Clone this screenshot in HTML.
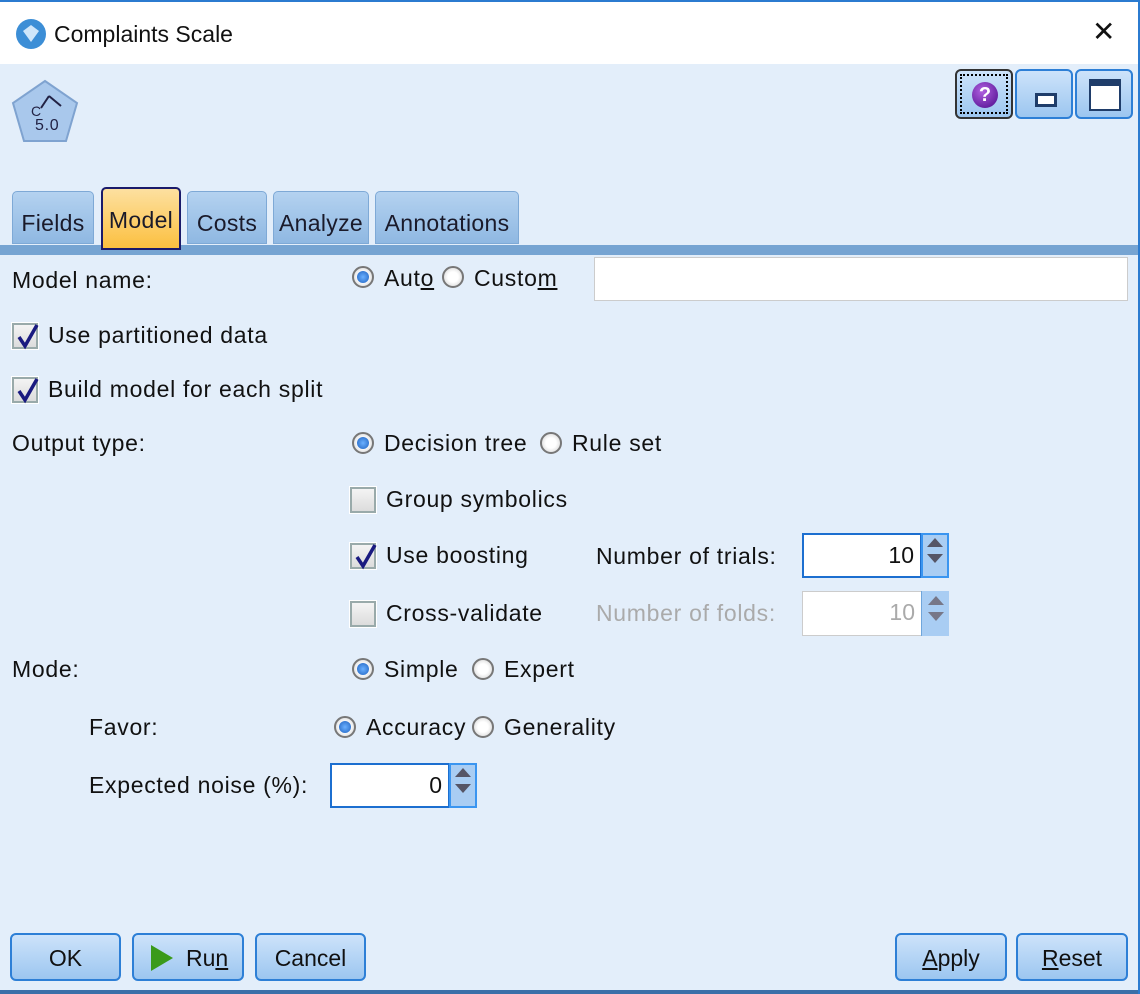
<!DOCTYPE html>
<html><head><meta charset="utf-8"><style>
*{box-sizing:border-box;margin:0;padding:0}
body{width:1140px;height:994px;background:#e3eefa;font-family:"Liberation Sans",Arial,sans-serif;font-size:23px;letter-spacing:0.7px;color:#111;position:relative;overflow:hidden}
.a{position:absolute;white-space:nowrap;line-height:30px}
.title{position:absolute;left:0;top:0;width:1140px;height:64px;background:#fff;border-top:2px solid #2b7bd0}
.tab{position:absolute;top:191px;height:53px;background:linear-gradient(#b4d2f0,#8fb8e2);border:1px solid #7ea9d6;border-radius:5px 5px 0 0;text-align:center;line-height:62px;font-size:23px;letter-spacing:0.3px;color:#1a1a2a}
.cb{position:absolute;width:26px;height:26px;border:2px solid #9aa;background:linear-gradient(#f4f4f4,#dcdcdc);outline:1px solid #fff}
.cb svg{position:absolute;left:1px;top:-2px}
.rd{position:absolute;width:22px;height:22px;border-radius:50%;border:2px solid #777;background:radial-gradient(#fff 40%,#ccc)}
.rd.on::after{content:"";position:absolute;left:3px;top:3px;width:12px;height:12px;border-radius:50%;background:radial-gradient(#6ab0ff,#1f62c0)}
.btn{position:absolute;top:933px;height:48px;border:2px solid #2d7fd6;border-radius:6px;background:linear-gradient(#cde3fa,#9cc6f0);text-align:center;line-height:46px;font-size:23px;letter-spacing:0;color:#111}
.inp{position:absolute;background:#fff;border:2px solid #1c6fd0;text-align:right;padding-right:6px;line-height:40px;letter-spacing:0}
.spin{position:absolute;width:28px;background:#a9cdf3;border-left:1px solid #6fa6dc}
</style></head><body>
<div class="title"></div>
<svg class="a" style="left:15px;top:18px" width="32" height="32"><circle cx="16" cy="16" r="15" fill="#3c8ed6"/><path d="M8 13l8-6 8 6-8 11z" fill="#cfe6fa"/></svg>
<div class="a" style="left:54px;top:19px;font-size:23px;letter-spacing:0">Complaints Scale</div>
<div class="a" style="left:1092px;top:17px;font-size:28px;font-weight:300;letter-spacing:0">✕</div>
<svg class="a" style="left:10px;top:78px" width="70" height="80"><path d="M35 3l32 22-11 38H14L3 25z" fill="#a9c8ec" stroke="#7fa3d0" stroke-width="2"/><text x="25" y="52" font-family="Liberation Sans" font-size="16" fill="#224">5.0</text><text x="21" y="38" font-size="14" fill="#224" font-family="Liberation Sans">C</text><path d="M39 18l-8 12M39 18l12 10" stroke="#224" stroke-width="2"/></svg>
<div style="position:absolute;left:955px;top:69px;width:58px;height:50px;border:2px solid #333;border-radius:6px;background:linear-gradient(#cde3fa,#9cc6f0)"><div style="position:absolute;inset:3px;border:2px dotted #000"></div><div style="position:absolute;left:15px;top:11px;width:26px;height:26px;border-radius:50%;background:radial-gradient(circle at 40% 35%,#b060e0,#4a0a8a);color:#fff;font-weight:bold;text-align:center;line-height:26px;font-size:20px;letter-spacing:0">?</div></div>
<div style="position:absolute;left:1015px;top:69px;width:58px;height:50px;border:2px solid #2d7fd6;border-radius:6px;background:linear-gradient(#cde3fa,#9cc6f0)"><div style="position:absolute;left:18px;top:22px;width:22px;height:14px;border:3px solid #1f3d6a;background:#fff"></div></div>
<div style="position:absolute;left:1075px;top:69px;width:58px;height:50px;border:2px solid #2d7fd6;border-radius:6px;background:linear-gradient(#cde3fa,#9cc6f0)"><div style="position:absolute;left:12px;top:8px;width:32px;height:32px;border:2px solid #1f3d6a;border-top-width:7px;background:#fff"></div></div>
<div style="position:absolute;left:0;top:245px;width:1140px;height:10px;background:#76a4d2"></div>
<div class="tab" style="left:12px;width:82px">Fields</div>
<div class="tab" style="left:101px;top:187px;width:80px;height:63px;background:linear-gradient(#fde0a0,#fbc040);border:2px solid #1a1a6a;line-height:62px">Model</div>
<div class="tab" style="left:187px;width:80px">Costs</div>
<div class="tab" style="left:273px;width:96px">Analyze</div>
<div class="tab" style="left:375px;width:144px">Annotations</div>

<div class="a" style="left:12px;top:265px">Model name:</div>
<div class="rd on" style="left:352px;top:266px"></div><div class="a" style="left:384px;top:263px">Aut<u>o</u></div>
<div class="rd" style="left:442px;top:266px"></div><div class="a" style="left:474px;top:263px">Custo<u>m</u></div>
<div style="position:absolute;left:594px;top:257px;width:534px;height:44px;background:#fff;border:1px solid #ccc"></div>

<div class="cb" style="left:12px;top:323px"><svg width="26" height="28"><path d="M4 14l6 9L22 2" stroke="#1a1a80" stroke-width="3.5" fill="none"/></svg></div><div class="a" style="left:48px;top:320px">Use partitioned data</div>
<div class="cb" style="left:12px;top:377px"><svg width="26" height="28"><path d="M4 14l6 9L22 2" stroke="#1a1a80" stroke-width="3.5" fill="none"/></svg></div><div class="a" style="left:48px;top:374px">Build model for each split</div>

<div class="a" style="left:12px;top:428px">Output type:</div>
<div class="rd on" style="left:352px;top:432px"></div><div class="a" style="left:384px;top:428px">Decision tree</div>
<div class="rd" style="left:540px;top:432px"></div><div class="a" style="left:572px;top:428px">Rule set</div>

<div class="cb" style="left:350px;top:487px"></div><div class="a" style="left:386px;top:484px">Group symbolics</div>
<div class="cb" style="left:350px;top:543px"><svg width="26" height="28"><path d="M4 14l6 9L22 2" stroke="#1a1a80" stroke-width="3.5" fill="none"/></svg></div><div class="a" style="left:386px;top:540px">Use boosting</div>
<div class="a" style="left:596px;top:541px">Number of trials:</div>
<div class="inp" style="left:802px;top:533px;width:120px;height:45px">10</div>
<div class="spin" style="left:921px;top:533px;height:45px;border:2px solid #3a95f0"><div style="margin:3px auto;width:0;border:8px solid transparent;border-bottom:9px solid #556;border-top:0"></div><div style="margin:7px auto;width:0;border:8px solid transparent;border-top:9px solid #556;border-bottom:0"></div></div>
<div class="cb" style="left:350px;top:601px"></div><div class="a" style="left:386px;top:598px">Cross-validate</div>
<div class="a" style="left:596px;top:598px;color:#aaa">Number of folds:</div>
<div class="inp" style="left:802px;top:591px;width:120px;height:45px;border:1px solid #ccc;color:#aaa">10</div>
<div class="spin" style="left:921px;top:591px;height:45px"><div style="margin:5px auto;width:0;border:8px solid transparent;border-bottom:9px solid #778;border-top:0"></div><div style="margin:7px auto;width:0;border:8px solid transparent;border-top:9px solid #778;border-bottom:0"></div></div>

<div class="a" style="left:12px;top:654px">Mode:</div>
<div class="rd on" style="left:352px;top:658px"></div><div class="a" style="left:384px;top:654px">Simple</div>
<div class="rd" style="left:472px;top:658px"></div><div class="a" style="left:504px;top:654px">Expert</div>

<div class="a" style="left:89px;top:712px">Favor:</div>
<div class="rd on" style="left:334px;top:716px"></div><div class="a" style="left:366px;top:712px">Accuracy</div>
<div class="rd" style="left:472px;top:716px"></div><div class="a" style="left:504px;top:712px">Generality</div>

<div class="a" style="left:89px;top:770px">Expected noise (%):</div>
<div class="inp" style="left:330px;top:763px;width:120px;height:45px">0</div>
<div class="spin" style="left:449px;top:763px;height:45px;border:2px solid #3a95f0"><div style="margin:3px auto;width:0;border:8px solid transparent;border-bottom:9px solid #556;border-top:0"></div><div style="margin:7px auto;width:0;border:8px solid transparent;border-top:9px solid #556;border-bottom:0"></div></div>

<div class="btn" style="left:10px;width:111px">OK</div>
<div class="btn" style="left:132px;width:112px;text-align:left;padding-left:52px">Ru<u>n</u><svg style="position:absolute;left:14px;top:9px" width="26" height="28"><path d="M3 1l22 13L3 27z" fill="#3a9a1a"/></svg></div>
<div class="btn" style="left:255px;width:111px">Cancel</div>
<div class="btn" style="left:895px;width:112px"><u>A</u>pply</div>
<div class="btn" style="left:1016px;width:112px"><u>R</u>eset</div>
<div style="position:absolute;left:0;top:990px;width:1140px;height:4px;background:#3a6fa8"></div>
<div style="position:absolute;right:0;top:0;width:2px;height:994px;background:#2b7bd0"></div>
</body></html>
